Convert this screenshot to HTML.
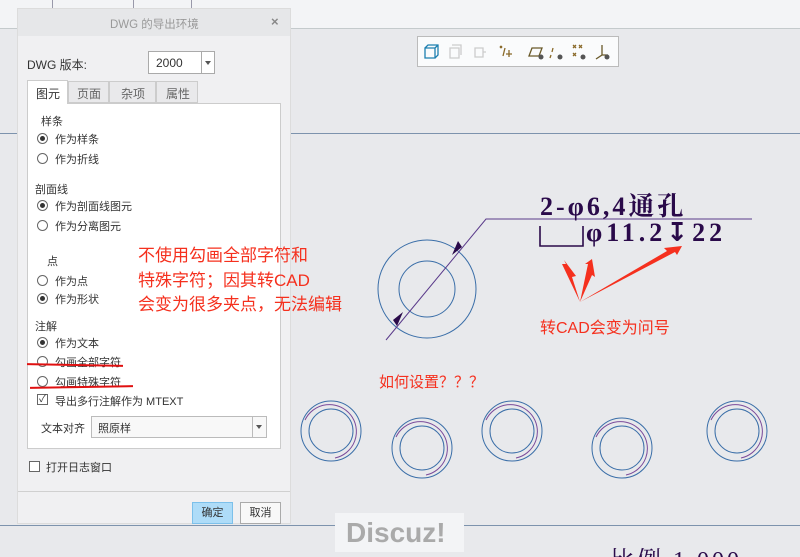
<!DOCTYPE html>
<html><head><meta charset="utf-8">
<style>
*{margin:0;padding:0;box-sizing:border-box}
html,body{width:800px;height:557px;overflow:hidden}
body{background:#e8e9ec;position:relative;font-family:"Liberation Sans","Noto Sans CJK SC",sans-serif;font-size:11px;color:#333}
.a{position:absolute}
.r{position:absolute;width:11px;height:11px;border:1px solid #666;border-radius:50%;background:#fff}
.r.on::after{content:"";position:absolute;left:2px;top:2px;width:5px;height:5px;border-radius:50%;background:#333}
.lbl{position:absolute;white-space:nowrap;font-size:11px;color:#333}
.red{position:absolute;z-index:10;color:#f5301e;white-space:nowrap;font-family:"Liberation Sans","Noto Sans CJK SC",sans-serif}
</style></head><body>
<div class="a" style="left:0;top:0;width:800px;height:29px;background:#f3f4f6;border-bottom:1px solid #c4cacc"></div>
<div class="a" style="left:52px;top:0;width:1px;height:8px;background:#99a"></div>
<div class="a" style="left:133px;top:0;width:1px;height:8px;background:#99a"></div>
<div class="a" style="left:191px;top:0;width:1px;height:8px;background:#99a"></div>
<div class="a" style="left:0;top:133px;width:800px;height:1px;background:#7d93ad"></div>
<div class="a" style="left:0;top:525px;width:800px;height:1px;background:#7d93ad"></div>

<!-- toolbar -->
<div class="a" style="left:417px;top:36px;width:202px;height:31px;background:#fafbfc;border:1px solid #bbb"></div>
<svg class="a" style="left:417px;top:36px" width="202" height="31" viewBox="0 0 202 31" fill="none" stroke-width="1.3">
<path d="M8 12h10v10H8zM8 12l3-3h10v10l-3 3M18 12l3-3" stroke="#1c7fb0"/>
<path d="M33 12h9v10h-9zM35 9h9v10" stroke="#ccc"/>
<path d="M58 12h8v9h-8zM66 16h3" stroke="#ccc"/>
<path d="M83 10l2 2M85 10l-2 2M88 12l-2 8M92 14v7M89 18h6" stroke="#8a6a2a"/>
<path d="M112 20l3-8h10l-3 8z" stroke="#6a5a2a"/><circle cx="124" cy="21" r="2.5" fill="#555"/>
<path d="M136 12l-1 4M134 19l-1 3" stroke="#8a6a2a"/><circle cx="143" cy="21" r="2.5" fill="#555"/>
<path d="M156 9l3 3M159 9l-3 3M162 9l3 3M165 9l-3 3M156 17l3 3M159 17l-3 3" stroke="#8a6a2a"/><circle cx="166" cy="21" r="2.5" fill="#555"/>
<path d="M185 9v10l-6 4M185 19h6" stroke="#6a5a2a"/><circle cx="190" cy="21" r="2.5" fill="#555"/>
</svg>

<!-- drawing -->
<svg class="a" style="left:0;top:0" width="800" height="557" viewBox="0 0 800 557" fill="none">
<circle cx="427" cy="289" r="49" stroke="#3a6ea8" stroke-width="1"/>
<circle cx="427" cy="289" r="28" stroke="#3a6ea8" stroke-width="1"/>
<path d="M386 340L486 219H752" stroke="#5a3a8a" stroke-width="1"/>
<path d="M462 247l-10 8 6-14z" fill="#2a0a4a"/>
<path d="M393 320l10-8-6 14z" fill="#2a0a4a"/>
<path d="M540 226v20h43v-20" stroke="#2a0a4a" stroke-width="1.6"/>
<g stroke="#3a6ea8" stroke-width="1">
<circle cx="331" cy="431" r="30"/><circle cx="331" cy="431" r="22"/>
<circle cx="422" cy="448" r="30"/><circle cx="422" cy="448" r="22"/>
<circle cx="512" cy="431" r="30"/><circle cx="512" cy="431" r="22"/>
<circle cx="622" cy="448" r="30"/><circle cx="622" cy="448" r="22"/>
<circle cx="737" cy="431" r="30"/><circle cx="737" cy="431" r="22"/>
</g>
<g stroke="#7a4a9a" stroke-width="1">
<path d="M305 420A27 27 0 1 1 335 458"/><path d="M396 437A27 27 0 1 1 426 475"/>
<path d="M486 420A27 27 0 1 1 516 458"/><path d="M596 437A27 27 0 1 1 626 475"/>
<path d="M711 420A27 27 0 1 1 741 458"/>
</g>
<g fill="#f5301e">
<path d="M580 302l-18-38 4 0-2-4 12 16-4 1z"/>
<path d="M580 302l8-38 -3 0 7-5 3 18-3-2z"/>
<path d="M580 302l95-50 2 3 5-9-18 2 3 3z"/>
</g>
</svg>
<div class="a" style="left:540px;top:186px;font-family:'Liberation Serif','Noto Serif CJK SC',serif;font-size:26px;color:#2a0a4a;white-space:nowrap;letter-spacing:3px;font-weight:bold">2-φ6,4通孔</div>
<div class="a" style="left:586px;top:218px;font-family:'Liberation Serif',serif;font-size:26px;color:#2a0a4a;white-space:nowrap;letter-spacing:4px;font-weight:bold">φ11.2<span style="font-family:'DejaVu Sans'">↧</span>22</div>
<div class="a" style="left:610px;top:540px;font-family:'Liberation Serif','Noto Serif CJK SC',serif;font-size:24px;color:#2a0a4a;white-space:nowrap;letter-spacing:3px">比例 1.000</div>

<div class="red" style="left:138px;top:244px;font-size:17px;line-height:24.5px">不使用勾画全部字符和<br>特殊字符；因其转CAD<br>会变为很多夹点，无法编辑</div>
<div class="red" style="left:540px;top:314px;font-size:16px">转CAD会变为问号</div>
<div class="red" style="left:379px;top:371px;font-size:15px">如何设置<span style="font-family:'Noto Sans CJK SC'">？？？</span></div>

<div class="a" style="left:335px;top:513px;width:129px;height:39px;background:#f3f4f6;color:#aaa;font-weight:bold;font-size:28px;line-height:39px;padding-left:11px">Discuz!</div>

<!-- dialog -->
<div class="a" style="left:17px;top:8px;width:274px;height:516px;background:#f0f0f2;border:1px solid #dcdcdc"></div>
<div class="a" style="left:18px;top:9px;width:272px;height:27px;background:#e6e7e9"></div>
<div class="lbl" style="left:110px;top:16px;color:#999;font-size:11.5px">DWG 的导出环境</div>
<div class="lbl" style="left:271px;top:14px;color:#888;font-size:13px;font-weight:bold">×</div>
<div class="lbl" style="left:27px;top:56px;font-size:12px">DWG 版本:</div>
<div class="a" style="left:148px;top:51px;width:67px;height:23px;background:#fff;border:1px solid #aaa"></div>
<div class="lbl" style="left:156px;top:56px;font-size:12px">2000</div>
<div class="a" style="left:201px;top:52px;width:1px;height:21px;background:#aaa"></div>
<div class="a" style="left:205px;top:61px;border:3px solid transparent;border-top:4px solid #555"></div>
<div class="a" style="left:27px;top:103px;width:254px;height:346px;background:#fff;border:1px solid #ccc"></div>
<div class="a" style="left:27px;top:80px;width:41px;height:24px;background:#fff;border:1px solid #ccc;border-bottom:none"></div>
<div class="a" style="left:68px;top:81px;width:41px;height:22px;background:#e9e9eb;border:1px solid #ccc"></div>
<div class="a" style="left:109px;top:81px;width:47px;height:22px;background:#e9e9eb;border:1px solid #ccc"></div>
<div class="a" style="left:156px;top:81px;width:42px;height:22px;background:#e9e9eb;border:1px solid #ccc"></div>
<div class="lbl" style="left:36px;top:85px;font-size:12px">图元</div>
<div class="lbl" style="left:77px;top:85px;font-size:12px;color:#666">页面</div>
<div class="lbl" style="left:121px;top:85px;font-size:12px;color:#666">杂项</div>
<div class="lbl" style="left:166px;top:85px;font-size:12px;color:#666">属性</div>

<div class="lbl" style="left:41px;top:113px">样条</div>
<div class="r on" style="left:37px;top:133px"></div><div class="lbl" style="left:55px;top:131px">作为样条</div>
<div class="r" style="left:37px;top:153px"></div><div class="lbl" style="left:55px;top:151px">作为折线</div>
<div class="lbl" style="left:35px;top:181px">剖面线</div>
<div class="r on" style="left:37px;top:200px"></div><div class="lbl" style="left:55px;top:198px">作为剖面线图元</div>
<div class="r" style="left:37px;top:220px"></div><div class="lbl" style="left:55px;top:218px">作为分离图元</div>
<div class="lbl" style="left:47px;top:253px">点</div>
<div class="r" style="left:37px;top:275px"></div><div class="lbl" style="left:55px;top:273px">作为点</div>
<div class="r on" style="left:37px;top:293px"></div><div class="lbl" style="left:55px;top:291px">作为形状</div>
<div class="lbl" style="left:35px;top:318px">注解</div>
<div class="r on" style="left:37px;top:337px"></div><div class="lbl" style="left:55px;top:335px">作为文本</div>
<div class="r" style="left:37px;top:356px"></div><div class="lbl" style="left:55px;top:354px">勾画全部字符</div>
<div class="r" style="left:37px;top:376px"></div><div class="lbl" style="left:55px;top:374px">勾画特殊字符</div>
<div class="a" style="left:27px;top:364px;width:96px;height:2px;background:#e01010;transform:rotate(1deg)"></div>
<div class="a" style="left:30px;top:386px;width:103px;height:2px;background:#e01010;transform:rotate(-1deg)"></div>
<div class="a" style="left:37px;top:394px;width:11px;height:11px;border:1px solid #666;background:#fff;font-size:10px;line-height:9px;text-align:center">✓</div>
<div class="lbl" style="left:55px;top:393px">导出多行注解作为 MTEXT</div>
<div class="lbl" style="left:41px;top:420px">文本对齐</div>
<div class="a" style="left:91px;top:416px;width:176px;height:22px;background:#f8f8f8;border:1px solid #bbb"></div>
<div class="lbl" style="left:98px;top:420px">照原样</div>
<div class="a" style="left:252px;top:417px;width:1px;height:20px;background:#bbb"></div>
<div class="a" style="left:256px;top:425px;border:3px solid transparent;border-top:4px solid #555"></div>
<div class="a" style="left:29px;top:461px;width:11px;height:11px;border:1px solid #666;background:#fff"></div>
<div class="lbl" style="left:46px;top:459px">打开日志窗口</div>
<div class="a" style="left:18px;top:491px;width:272px;height:1px;background:#d0d0d0"></div>
<div class="a" style="left:192px;top:502px;width:41px;height:22px;background:#aedcf8;border:1px solid #7cc0ea;text-align:center;line-height:20px">确定</div>
<div class="a" style="left:240px;top:502px;width:41px;height:22px;background:#f8f8f8;border:1px solid #aaa;text-align:center;line-height:20px">取消</div>
</body></html>
